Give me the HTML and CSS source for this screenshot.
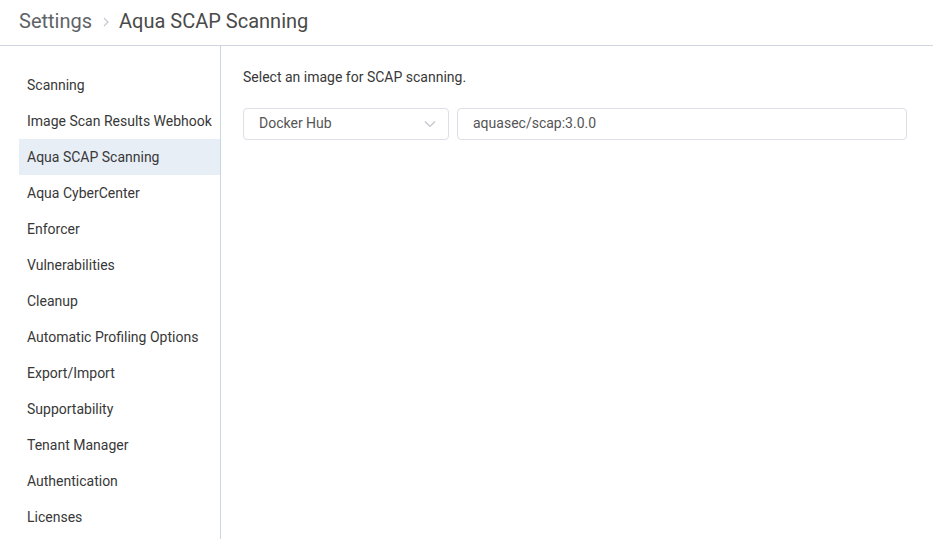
FILE: index.html
```
<!DOCTYPE html>
<html>
<head>
<meta charset="utf-8">
<link rel="stylesheet" href="styles.css">
</head>
<body>
<header class="header">
  <span class="crumb">Settings</span>
  <svg class="sep" width="10" height="12" viewBox="0 0 10 12"><path d="M3 2 L7 6 L3 10" fill="none" stroke="#c4c8cf" stroke-width="1.2"/></svg>
  <span class="title">Aqua SCAP Scanning</span>
</header>
<div class="main">
  <nav class="sidebar">
    <div class="item">Scanning</div>
    <div class="item">Image Scan Results Webhook</div>
    <div class="item active">Aqua SCAP Scanning</div>
    <div class="item">Aqua CyberCenter</div>
    <div class="item">Enforcer</div>
    <div class="item">Vulnerabilities</div>
    <div class="item">Cleanup</div>
    <div class="item">Automatic Profiling Options</div>
    <div class="item">Export/Import</div>
    <div class="item">Supportability</div>
    <div class="item">Tenant Manager</div>
    <div class="item">Authentication</div>
    <div class="item">Licenses</div>
  </nav>
  <section class="content">
    <p class="label">Select an image for SCAP scanning.</p>
    <div class="row">
      <div class="select">
        <span>Docker Hub</span>
        <svg width="12" height="8" viewBox="0 0 12 8"><path d="M1 1.5 L6 6.5 L11 1.5" fill="none" stroke="#c0c4cc" stroke-width="1.2"/></svg>
      </div>
      <div class="input">aquasec/scap:3.0.0</div>
    </div>
  </section>
</div>
</body>
</html>
```
FILE: styles.css
```
* { box-sizing: border-box; }
html, body { margin: 0; padding: 0; background: #fff; }
body {
  font-family: Roboto, "Liberation Sans", sans-serif;
  color: #333;
  width: 933px;
  height: 539px;
  overflow: hidden;
}
.header {
  height: 46px;
  border-bottom: 1px solid #cdd5de;
  display: flex;
  align-items: center;
  padding-left: 19px;
  padding-bottom: 4px;
  font-size: 20px;
}
.crumb { color: #5f6368; }
.sep { margin: 2px 8px 0 9px; }
.title { color: #4a4a4a; }
.main {
  display: flex;
  height: 493px;
}
.sidebar {
  margin-left: 19px;
  width: 202px;
  border-right: 1px solid #c9d6e4;
  padding-top: 21px;
}
.item {
  height: 36px;
  line-height: 36px;
  padding-left: 8px;
  font-size: 14px;
  color: #383838;
  white-space: nowrap;
}
.item.active { background: #e8eef6; }
.content {
  padding: 21px 0 0 22px;
  flex: 1;
}
.label {
  margin: 0;
  font-size: 14px;
  color: #383838;
  line-height: 20px;
}
.row {
  display: flex;
  gap: 8px;
  margin-top: 21px;
}
.select, .input {
  height: 32px;
  border: 1px solid #dcdfe6;
  border-radius: 4px;
  font-size: 14px;
  color: #555;
  display: flex;
  align-items: center;
  padding-left: 15px;
  padding-bottom: 2px;
}
.select {
  width: 206px;
  justify-content: space-between;
  padding-right: 12px;
}
.select svg { margin-top: 2px; }
.input { width: 450px; }
```
